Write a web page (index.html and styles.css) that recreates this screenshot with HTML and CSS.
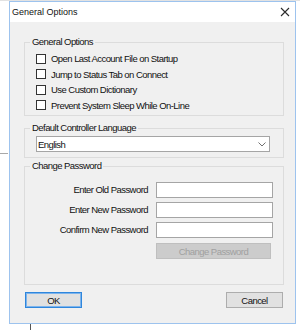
FILE: index.html
```html
<!DOCTYPE html>
<html lang="en">
<head>
    <meta charset="UTF-8">
    <title>General Options</title>
    <link rel="stylesheet" href="styles.css">
</head>
<body>
    <div class="desktop">
        <div class="top-strip"></div>

        <div class="window">
            <div class="titlebar">
                <span class="title">General Options</span>
                <svg class="close" width="10" height="10" viewBox="0 0 10 10">
                    <path d="M1 1 L9 9 M9 1 L1 9" stroke="#2b2b2b" stroke-width="1.1" fill="none"/>
                </svg>
            </div>

            <div class="client">
                <fieldset class="group group-general">
                    <legend>General Options</legend>
                    <label class="check"><input type="checkbox"><span>Open Last Account File on Startup</span></label>
                    <label class="check"><input type="checkbox"><span>Jump to Status Tab on Connect</span></label>
                    <label class="check"><input type="checkbox"><span>Use Custom Dictionary</span></label>
                    <label class="check"><input type="checkbox"><span>Prevent System Sleep While On-Line</span></label>
                </fieldset>

                <fieldset class="group group-lang">
                    <legend>Default Controller Language</legend>
                    <div class="combo">
                        <span>English</span>
                        <svg width="8" height="5" viewBox="0 0 8 5">
                            <polyline points="0.5,0.5 4,4 7.5,0.5" stroke="#707070" fill="none"/>
                        </svg>
                    </div>
                </fieldset>

                <fieldset class="group group-pass">
                    <legend>Change Password</legend>
                    <div class="pass-grid">
                        <label for="old-pass">Enter Old Password</label>
                        <input type="password" id="old-pass">
                        <label for="new-pass">Enter New Password</label>
                        <input type="password" id="new-pass">
                        <label for="confirm-pass">Confirm New Password</label>
                        <input type="password" id="confirm-pass">
                        <button class="btn btn-change" disabled>Change Password</button>
                    </div>
                </fieldset>

                <div class="actions">
                    <button class="btn btn-default">OK</button>
                    <button class="btn">Cancel</button>
                </div>
            </div>
        </div>

        <div class="side-line"></div>
        <div class="under-line"></div>
    </div>
</body>
</html>
```

FILE: styles.css
```css
body {
    margin: 0;
    background: #ffffff;
    font-family: "Liberation Sans", sans-serif;
    font-size: 9.5px;
    letter-spacing: -0.55px;
    color: #111;
}
.desktop {
    position: relative;
    width: 300px;
    height: 330px;
    overflow: hidden;
}
.top-strip {
    height: 1px;
    background: #e2e2e2;
}

/* dialog window */
.window {
    width: 287px;
    height: 323px;
    margin-left: 9px;
    box-sizing: border-box;
    border: 1px solid #9dc3ee;
    display: flex;
    flex-direction: column;
}
.titlebar {
    height: 20px;
    background: #ffffff;
    display: flex;
    align-items: center;
    justify-content: space-between;
    padding: 0 5px 0 2px;
}
.title {
    font-size: 9px;
    letter-spacing: 0;
}
.client {
    flex: 1;
    background: #f0f0f0;
    padding: 14px 0 0 14px;
}

/* group boxes */
.group {
    width: 260px;
    box-sizing: border-box;
    margin: 0;
    border: 1px solid #dcdcdc;
    min-inline-size: 0;
}
.group legend {
    padding: 0 2px;
    height: 12px;
    line-height: 12px;
}
.group-general {
    padding: 3px 5px 2px;
}
.group-lang {
    margin-top: 6px;
    padding: 2px 5px 5px;
}
.group-pass {
    margin-top: 2px;
    padding: 10px 5px 25px;
}

.check {
    display: flex;
    align-items: center;
    height: 15.5px;
    margin-left: 6px;
}
.check input {
    appearance: none;
    width: 10px;
    height: 10px;
    margin: 0 5px 0 0;
    box-sizing: border-box;
    border: 1px solid #333333;
    background: #ffffff;
}

.combo {
    margin-left: 6px;
    width: 234px;
    height: 16px;
    box-sizing: border-box;
    border: 1px solid #a5a5a5;
    background: #ffffff;
    display: flex;
    align-items: center;
    justify-content: space-between;
    padding: 0 3px 0 1px;
}

.pass-grid {
    display: grid;
    grid-template-columns: 118px 117px;
    column-gap: 8px;
    row-gap: 4px;
}
.pass-grid label {
    text-align: right;
    line-height: 16px;
}
.pass-grid input {
    appearance: none;
    height: 16px;
    box-sizing: border-box;
    margin: 0;
    border: 1px solid #a5a5a5;
    background: #ffffff;
}

/* buttons */
.btn {
    height: 16px;
    width: 57px;
    padding: 0;
    box-sizing: border-box;
    font: inherit;
    letter-spacing: inherit;
    color: #111;
    background: #e1e1e1;
    border: 1px solid #adadad;
    border-radius: 0;
}
.btn-default {
    border-color: #2f86dc;
    box-shadow: inset 0 0 0 1px #7db4ec;
}
.btn-change {
    grid-column: 2;
    width: 115px;
    margin-top: 1px;
    background: #cccccc;
    border-color: #bfbfbf;
    color: #a0a0a0;
}
.actions {
    width: 260px;
    margin-top: 7px;
    box-sizing: border-box;
    padding: 0 1px;
    display: flex;
    justify-content: space-between;
}

/* bits of the desktop behind the dialog */
.side-line {
    position: absolute;
    left: 0;
    top: 153px;
    width: 8px;
    height: 1px;
    background: #a8a8a8;
}
.under-line {
    position: absolute;
    left: 30px;
    top: 324px;
    width: 1px;
    height: 6px;
    background: #555555;
}
```
